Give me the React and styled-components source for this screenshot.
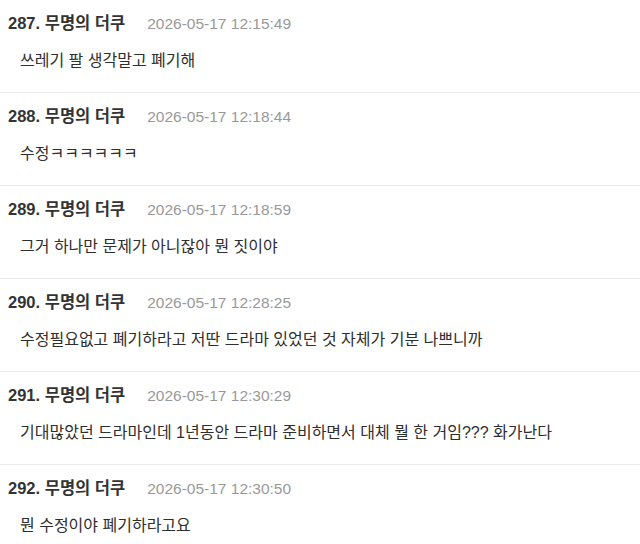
import React from "react";
import styled, { createGlobalStyle } from "styled-components";

const Global = createGlobalStyle`
  html, body { margin: 0; padding: 0; background: #fff; }
  body { font-family: "Liberation Sans", "Noto Sans CJK KR", sans-serif; }
`;

const List = styled.div`
  display: flex;
  flex-direction: column;
  width: 640px;
`;

const Row = styled.div`
  display: flex;
  flex-direction: column;
  height: 93px;
  box-sizing: border-box;
  border-bottom: 1px solid #ececec;
  padding: 10px 0 0 8px;
`;

const Header = styled.div`
  display: flex;
  align-items: baseline;
  height: 21px;
`;

const Author = styled.span`
  font-size: 16.5px;
  font-weight: 700;
  color: #333;
`;

const Time = styled.span`
  font-size: 15.5px;
  color: #999;
  margin-left: 22px;
`;

const Body = styled.div`
  margin-top: 19px;
  padding-left: 12px;
  font-size: 16px;
  color: #2e2e2e;
  line-height: 21px;
`;

const data = [
  ["287", "2026-05-17 12:15:49", "쓰레기 팔 생각말고 폐기해"],
  ["288", "2026-05-17 12:18:44", "수정ㅋㅋㅋㅋㅋㅋ"],
  ["289", "2026-05-17 12:18:59", "그거 하나만 문제가 아니잖아 뭔 짓이야"],
  ["290", "2026-05-17 12:28:25", "수정필요없고 폐기하라고 저딴 드라마 있었던 것 자체가 기분 나쁘니까"],
  ["291", "2026-05-17 12:30:29", "기대많았던 드라마인데 1년동안 드라마 준비하면서 대체 뭘 한 거임??? 화가난다"],
  ["292", "2026-05-17 12:30:50", "뭔 수정이야 폐기하라고요"],
];

export default function App() {
  return (
    <>
      <Global />
      <List>
        {data.map(([n, t, b]) => (
          <Row key={n}>
            <Header>
              <Author>{n}. 무명의 더쿠</Author>
              <Time>{t}</Time>
            </Header>
            <Body>{b}</Body>
          </Row>
        ))}
      </List>
    </>
  );
}
